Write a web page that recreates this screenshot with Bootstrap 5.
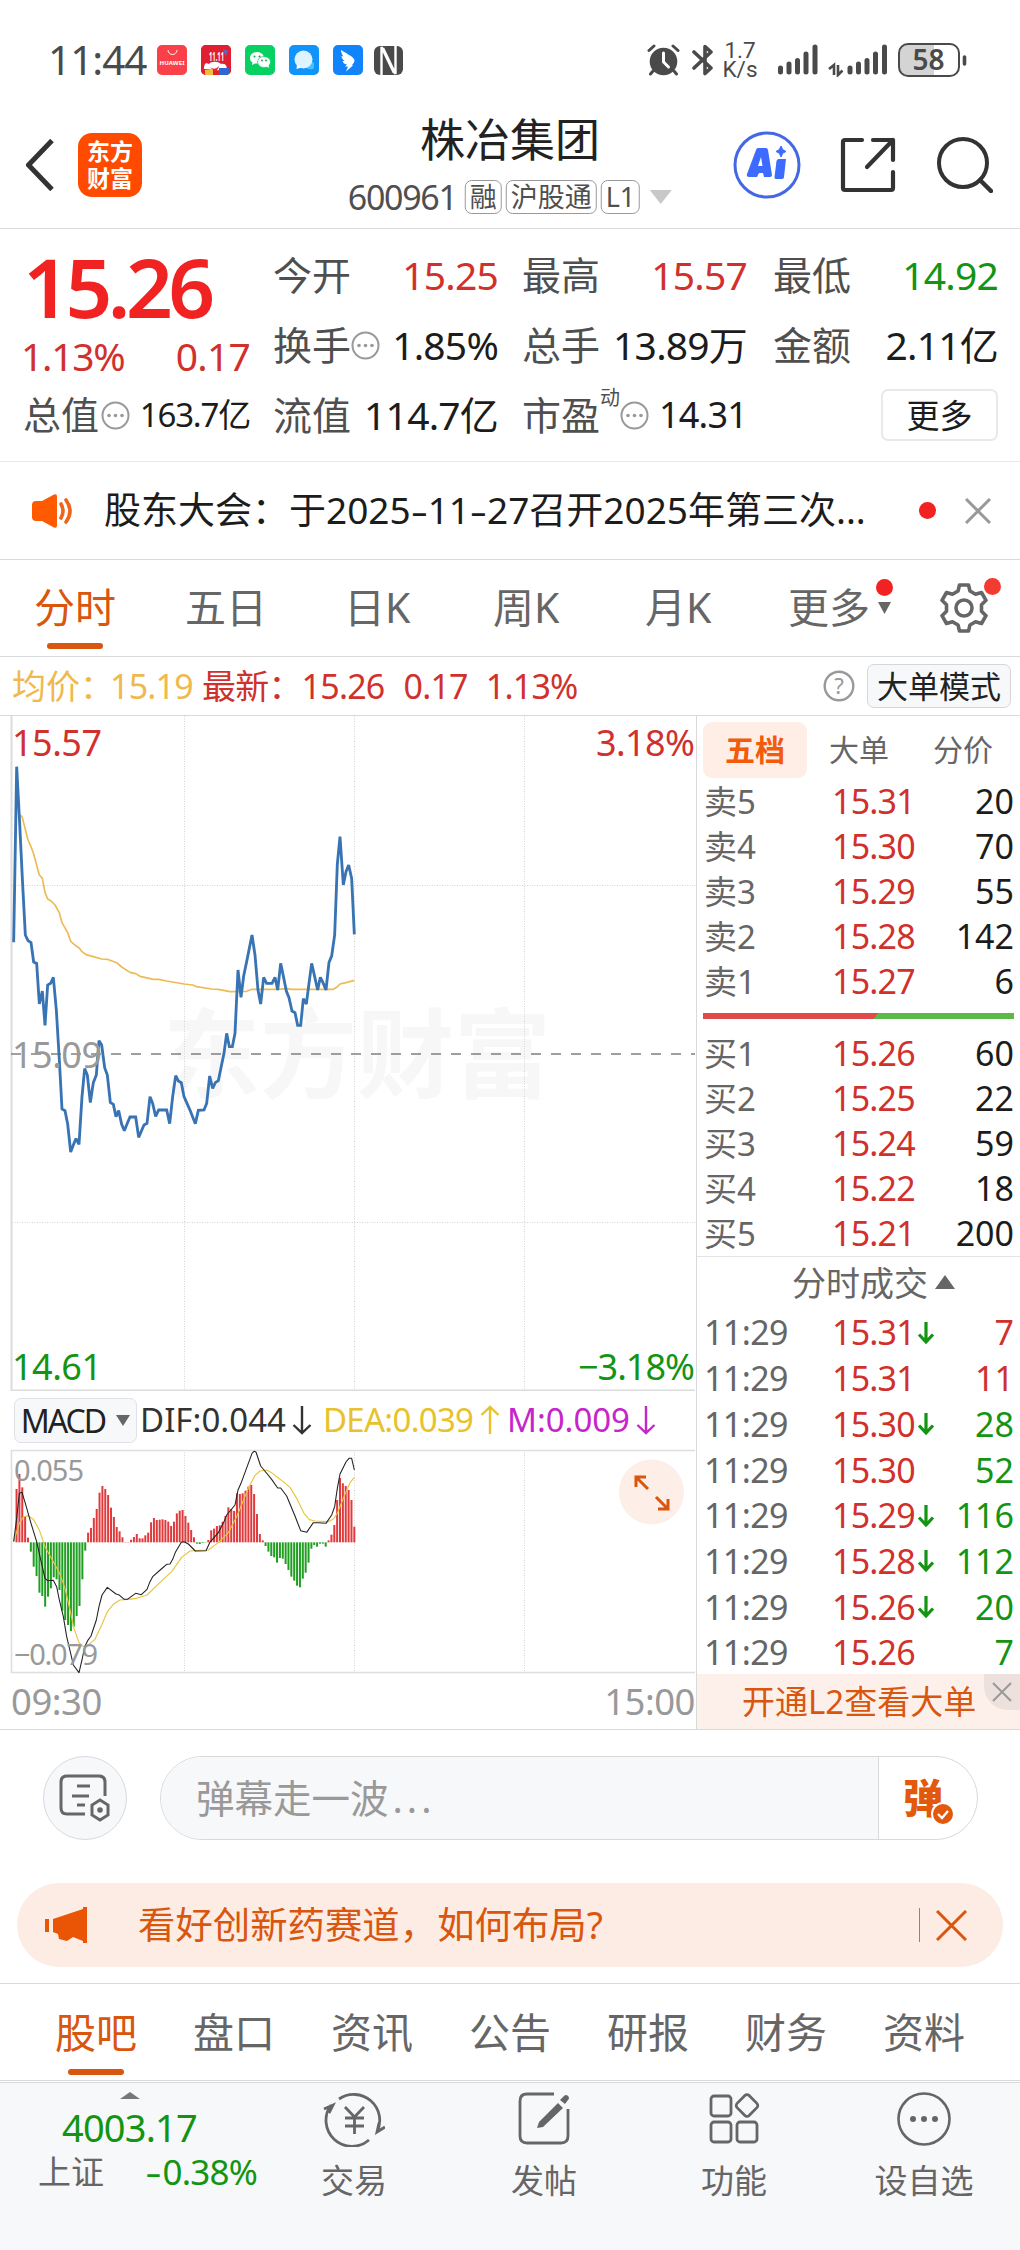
<!DOCTYPE html>
<html lang="zh-CN">
<head>
<meta charset="utf-8">
<meta name="viewport" content="width=device-width, initial-scale=1">
<title>株冶集团 600961</title>
<link rel="stylesheet" href="https://cdn.jsdelivr.net/npm/bootstrap@5.3.0/dist/css/bootstrap.min.css">
<style>
:root{--up:#d0312d;--down:#139413;--brand:#d9560f;--ink:#1c1c1c;--mid:#4f4f4f;--soft:#666;--line:#d8d9db}
body{width:1020px;font-family:"Noto Sans","Noto Sans CJK SC",sans-serif;color:var(--ink);background:#fff;line-height:1.2;overflow-x:hidden}
svg{display:block;flex:none}
svg text{font-family:"Noto Sans","Noto Sans CJK SC",sans-serif}
.up{color:var(--up)}.down{color:var(--down)}.brand{color:var(--brand)}.soft{color:var(--soft)}.mid{color:var(--mid)}
.lh{white-space:nowrap}
.statusbar{height:113px;padding:7px 52px 0 48px;color:#4a4a4a}
.clock{font-size:40.5px;letter-spacing:-1px;width:109px}
.appicon{width:30px;height:30px;border-radius:5px;margin-right:14px;overflow:hidden}
.rate{font-family:Roboto,"Noto Sans",sans-serif;font-size:22.5px;line-height:19.5px;width:36px;text-align:center}
.head{height:116px;border-bottom:1px solid var(--line);padding:0 27px 12px 26px}
.brandlogo{width:64px;height:64px;border-radius:14px;background:#ff4a00;color:#fff;font-size:23px;line-height:27px;font-weight:700;margin-left:24px;text-align:center}
.stockname{font-size:45px;line-height:54px;color:#222}
.code{font-size:34px;letter-spacing:-1.3px;color:var(--mid);margin-right:8px}
.tagbox{border:1px solid #999;border-radius:7px;height:34px;font-size:27px;line-height:32px;color:var(--mid);padding:0 4px;margin-right:4px}
.caret-d{width:0;height:0;border-left:11px solid transparent;border-right:11px solid transparent;border-top:14px solid #c8c8c8}
.quote{height:233px;padding:11px 20px 0 24px;border-bottom:1px solid #e8e8e8;gap:24px}
.qcol{width:225px;flex:none}
.qcol.wide{width:227px;margin-left:-1px}
.qcol:last-child{margin-left:2px}
.qrow{height:70px;font-size:39px;white-space:nowrap}
.qrow .k{color:var(--mid)}
.price{height:92px;font-size:82px;font-weight:600;color:#f02222;letter-spacing:-4.5px}
.chg{height:48px;font-size:39px}
.tight{letter-spacing:-.8px}
.morebtn{width:117px;height:52px;border:2px solid #e9e9eb;border-radius:7px;font-size:33px;line-height:47px;padding:0;color:var(--ink);background:#fff}
.notice{height:98px;border-bottom:1px solid var(--line);padding:0 29px 0 32px;font-size:37px}
.hy{display:inline-block;width:17px;text-align:center;transform:scaleX(1.45)}
.reddot{width:17px;height:17px;border-radius:50%;background:#f02222}
.periods{height:97px;border-bottom:1px solid var(--line);font-size:41px;color:var(--soft)}
.periods>div{height:96px;white-space:nowrap}
.ul{position:absolute;height:6px;width:56px;border-radius:3px;background:var(--brand)}
.info{height:58px;font-size:34px;padding:0 9px 0 12px;white-space:nowrap}
.modebtn{width:144px;height:44px;border:1px solid #d4d6da;border-radius:7px;background:#f7f8fa;font-size:31px;line-height:42px;padding:0;color:#222}
.main{height:1015px;border-top:1px solid var(--line);border-bottom:1px solid var(--line)}
.left{width:697px;border-right:1px solid var(--line)}
.right{width:323px}
.macdrow{height:58px;padding-left:14px;font-size:33px;white-space:nowrap}
.macdbtn{width:123px;height:45px;border:1px solid #dfe2e6;border-radius:7px;background:#f7f8fa;padding:0;font-size:32px;line-height:43px;color:#222}
.booktabs{height:62px;padding:6px 0 0 6px;font-size:30px;color:var(--soft)}
.booktabs>div{width:104px;height:56px;line-height:56px;text-align:center;white-space:nowrap}
.booktabs .on{background:#feeee6;border-radius:9px;color:#f25a0c;font-weight:700}
.book{padding-top:1px}
.brow{height:45px;padding:0 6px 0 7px;font-size:34px;white-space:nowrap}
.brow .l{width:128px;color:var(--soft)}
.brow .l.cj{font-size:33px}
.brow .p{color:var(--up);flex:1}
.tick .l{font-size:34px;letter-spacing:-.6px}
.brow.tick{height:45.7px}
.tick .p{display:flex;align-items:center}
.bidask{height:6px;margin:9px 6px 12px 6px;background:linear-gradient(125deg,#df4b4b 55.5%,#5cb848 55.6%)}
.tickhead{height:54px;border-top:1px solid #e3e4e6;font-size:34px;color:var(--soft);padding-left:30px}
.l2{height:55px;margin-top:-1.6px;background:#fdf0ea;font-size:33px;white-space:nowrap;padding-left:45px}
.l2x{position:absolute;right:0;top:0;width:36px;height:36px;background:#ece1dc;border-bottom-left-radius:24px}
.danmu{height:153px;padding:26px 42px 0 43px}
.roundbtn{width:84px;height:84px;border-radius:50%;border:1px solid #d8dae2;background:#f7f8fa;margin-right:33px}
.pill{width:818px;height:84px;border-radius:42px;border:1px solid var(--line);background:#fff;overflow:hidden}
.pill .ph{width:718px;background:#f7f8fa;border-right:1px solid var(--line);font-size:38.500px;color:#999;padding-left:35px}
.dotdot{letter-spacing:4px;margin-left:4px}
.send{font-size:40px;font-weight:900;color:#e2590d}
.promo{height:84px;margin:0 17px 16px;border-radius:42px;background:#fcece3;font-size:37.400px;color:var(--brand);padding:0 36px 0 28px}
.sections{height:98px;border-top:1px solid var(--line);border-bottom:1px solid var(--line);font-size:41px;color:var(--soft);padding:2px 0 0 27px}
.sections>div{width:138px;height:94px;white-space:nowrap}
.bottombar{height:168px;margin-top:1px;border-top:1px solid var(--line);background:#f7f8fa;color:var(--soft);font-size:33px}
.bi{width:190px;padding-top:8px}
.bi span{line-height:40px;margin-top:14px}
.idx{width:259px}
</style>
</head>
<body>
<div class="statusbar d-flex align-items-center">
  <span class="clock">11:44</span>
  <div class="appicon" style="background:#fb4049"><svg width="30" height="30"><path d="M11 5a4.500 4.500 0 0 0 9 0" fill="none" stroke="#fff" stroke-width="1"/><text x="15" y="19.500" font-size="6" font-weight="700" text-anchor="middle" fill="#fff" textLength="25">HUAWEI</text></svg></div>
  <div class="appicon" style="background:#d81e2c"><svg width="30" height="30"><path d="M0 0h30v30H0z" fill="#e01f30"/><path d="M22 4l5 2-2 5z" fill="#4b6fd0"/><text x="15.500" y="16" font-size="12" font-weight="700" text-anchor="middle" fill="#fff" textLength="15" lengthAdjust="spacingAndGlyphs">11.11</text><path d="M3 24c0-7 3-6 5-5 2-3 9-3 12 0 5-1 6 2 6 7z" fill="#fff"/><path d="M9 22q5 4 9-1-1 5-5 5z" fill="#d8342c"/><path d="M4 25h8v5H4z" fill="#f5b93c"/><path d="M18 23h10v7H18z" fill="#2f66d6"/></svg></div>
  <div class="appicon" style="background:#07d160"><svg width="30" height="30" fill="#fff"><path d="M12 7c-4 0-7 2.600-7 6 0 2 1 3.600 2.500 4.600L7 20l3-1.600c4 .8 9-1 9-5.400 0-3.400-3-6-7-6z"/><ellipse cx="19" cy="17" rx="6.500" ry="5.500" stroke="#07d160" stroke-width=".7"/><path d="M21 21l3 2-.5-3z"/><g fill="#07a850"><circle cx="9.500" cy="11.500" r="1"/><circle cx="14.500" cy="11.500" r="1"/><circle cx="17" cy="15.500" r=".9"/><circle cx="21" cy="15.500" r=".9"/></g></svg></div>
  <div class="appicon" style="background:#1093fb"><svg width="30" height="30"><path d="M18 17h6.500c1 3 .5 5 0 7-3 .8-6 .3-8-2z" fill="#3cc6ff"/><circle cx="14.500" cy="14.500" r="9" fill="#dff3ff"/><path d="M8 20l-.5 4 5-1.500z" fill="#fff"/></svg></div>
  <div class="appicon" style="background:#1284fb;margin-right:11px"><svg width="30" height="30"><path d="M8 5c4 3 10 5 13 9 1.500 2-1 5-2 6l1 .5-7 6 2-5h-3l2-2c-3-.5-4-2-4.500-3.500h2C9 14 8.500 12 8.500 11l2 .5C8.500 9 8 7 8 5z" fill="#fff"/></svg></div>
  <svg width="29" height="29"><rect width="29" height="29" rx="6" fill="#4a4a4a"/><path d="M7.500 29V1L20 27M21.500 0v28L9 2" fill="none" stroke="#fff" stroke-width="2.400"/></svg>
  <div class="flex-grow-1"></div>
  <svg width="34" height="32" viewBox="0 0 34 32"><circle cx="16.500" cy="17.500" r="13.800" fill="#4a4a4a"/><path d="M2 6.500L7 2M31 6.500L26 2M6 27l-2.500 3M27 27l2.500 3" stroke="#4a4a4a" stroke-width="3" stroke-linecap="round"/><path d="M16.500 9v9l5 5" fill="none" stroke="#fff" stroke-width="3" stroke-linecap="round"/></svg>
  <svg class="ms-2" width="30" height="32" viewBox="0 0 30 32" style="margin-right:3px"><path d="M5 8l17 16-6 5.500V2.500L22 8 5 24" fill="none" stroke="#4a4a4a" stroke-width="3.600" stroke-linecap="round" stroke-linejoin="round"/></svg>
  <div class="rate">1.7<br>K/s</div>
  <svg style="margin-left:19px" width="112" height="34" viewBox="0 0 112 34"><g stroke="#4a4a4a" stroke-width="5" stroke-linecap="round"><path d="M3.500 25v4M12 21v8M20.500 17.500v11.500M29 11v18M38 4v25M73 25v4M81.500 21v8M90 17.500v11.500M98.500 11v18M107.500 4v25"/></g><path d="M52 26l5-4v10M61 22v10l4.500-4.500" fill="none" stroke="#4a4a4a" stroke-width="2.600"/></svg>
  <svg style="margin-left:9px" width="70" height="34" viewBox="0 0 70 34"><path d="M9 1h27v32H9q-8 0-8-8V9q0-8 8-8" fill="#d4d4d4"/><rect x="1" y="1" width="60" height="32" rx="9" fill="none" stroke="#4a4a4a" stroke-width="2"/><path d="M66.500 14v7" stroke="#4a4a4a" stroke-width="3.600" stroke-linecap="round"/><text x="30.500" y="27" font-size="28" font-weight="600" text-anchor="middle" fill="#4a4a4a" textLength="32">58</text></svg>
</div>

<header class="head d-flex align-items-center position-relative">
  <svg width="28" height="52" viewBox="0 0 28 52"><path d="M26 1.500L2.500 26 26 50.500" fill="none" stroke="#333" stroke-width="5"/></svg>
  <div class="brandlogo d-flex align-items-center justify-content-center">东方<br>财富</div>
  <div class="flex-grow-1"></div>
  <svg width="68" height="68" viewBox="0 0 68 68"><circle cx="34" cy="34" r="32" fill="#fff" stroke="#4468e4" stroke-width="3"/><path d="M25 17h8q1.500 0 2 2l4 25q0 2-2 2h-6l-1-4h-4l-2 4h-8q-3 0-2-3l9-24q.5-2 2-2zM28 26l-3 9h4.500z" fill="#3d6bff" fill-rule="evenodd"/><path d="M46 28h7l-2 18q0 2-2 2h-6q-2 0-1.500-2l2-16q.5-2 2.500-2z" fill="#3d6bff"/><path d="M48 15l1.700 3.600L53 20.500l-3.300 1.700L48 26l-1.700-3.800-3.300-1.700 3.300-1.900z" fill="#3d6bff" stroke="#3d6bff" stroke-width="1"/></svg>
  <svg style="margin-left:39px" width="56" height="56" viewBox="0 0 56 56"><path d="M22 3H5q-2 0-2 2v46q0 2 2 2h46q2 0 2-2V35M33 3h20v20M53 3L27 30" fill="none" stroke="#333" stroke-width="4.200" stroke-linecap="round" stroke-linejoin="round"/></svg>
  <svg style="margin-left:41px" width="56" height="56" viewBox="0 0 56 56"><circle cx="26" cy="26" r="24" fill="none" stroke="#333" stroke-width="4"/><path d="M43 43l11 11" stroke="#333" stroke-width="4.500" stroke-linecap="round"/></svg>
  <div class="position-absolute top-0 start-50 translate-middle-x d-flex flex-column align-items-center">
    <div class="stockname lh">株冶集团</div>
    <div class="d-flex align-items-center lh" style="margin-top:12px;height:36px"><span class="code">600961</span><span class="tagbox">融</span><span class="tagbox">沪股通</span><span class="tagbox">L1</span><span class="caret-d" style="margin-left:6px"></span></div>
  </div>
</header>

<section class="quote d-flex">
  <div class="qcol wide">
    <div class="price d-flex align-items-center">15.26</div>
    <div class="chg up d-flex align-items-center justify-content-between"><span style="letter-spacing:-1.300px;margin-left:-2px">1.13%</span><span class="tight">0.17</span></div>
    <div class="qrow d-flex align-items-center"><span class="k" style="font-size:38px">总值</span><svg width="29" height="29" style="margin-left:2px"><use href="#dots"/></svg><span class="ms-auto" style="font-size:33px;letter-spacing:-1.200px">163.7亿</span></div>
  </div>
  <div class="qcol" style="margin-left:-1px">
    <div class="qrow d-flex align-items-center justify-content-between"><span class="k">今开</span><span class="up tight">15.25</span></div>
    <div class="qrow d-flex align-items-center"><span class="k">换手</span><svg width="29" height="29"><use href="#dots"/></svg><span class="ms-auto tight">1.85%</span></div>
    <div class="qrow d-flex align-items-center justify-content-between"><span class="k">流值</span><span class="tight">114.7亿</span></div>
  </div>
  <div class="qcol">
    <div class="qrow d-flex align-items-center justify-content-between"><span class="k">最高</span><span class="up tight">15.57</span></div>
    <div class="qrow d-flex align-items-center justify-content-between"><span class="k">总手</span><span class="tight">13.89万</span></div>
    <div class="qrow d-flex align-items-center"><span class="k">市盈</span><span class="k align-self-start" style="font-size:20px;margin-top:6px">动</span><svg width="29" height="29"><use href="#dots"/></svg><span class="ms-auto tight" style="font-size:36px">14.31</span></div>
  </div>
  <div class="qcol">
    <div class="qrow d-flex align-items-center justify-content-between"><span class="k">最低</span><span class="down tight">14.92</span></div>
    <div class="qrow d-flex align-items-center justify-content-between"><span class="k">金额</span><span class="tight">2.11亿</span></div>
    <div class="qrow d-flex align-items-center justify-content-end"><button class="btn morebtn">更多</button></div>
  </div>
</section>

<section class="notice d-flex align-items-center">
  <svg width="42" height="36" viewBox="0 0 42 36"><path d="M4 8h6L22 1.500q3-1 3 2v29q0 3-3 2L10 28H4q-4 0-4-4V12q0-4 4-4z" fill="#ff5a00"/><path d="M29 11q4 7 0 14M34 7q8 11 0 22" fill="none" stroke="#f0641a" stroke-width="3.600" stroke-linecap="round"/></svg>
  <span class="lh" style="margin-left:30px">股东大会：于2025<span class="hy">-</span>11<span class="hy">-</span>27召开2025年第三次...</span>
  <span class="reddot ms-auto" style="margin-right:29px"></span>
  <svg width="26" height="26" viewBox="0 0 26 26"><path d="M1 1l24 24M25 1L1 25" stroke="#999" stroke-width="3"/></svg>
</section>

<nav class="periods d-flex">
  <div class="brand position-relative d-flex align-items-center" style="padding-left:34px;width:185px">分时<span class="ul" style="left:47px;bottom:7px"></span></div>
  <div class="d-flex align-items-center" style="width:159px">五日</div>
  <div class="d-flex align-items-center" style="width:149px">日K</div>
  <div class="d-flex align-items-center" style="width:152px">周K</div>
  <div class="d-flex align-items-center" style="width:143px">月K</div>
  <div class="d-flex align-items-center position-relative" style="width:152px">更多<svg style="margin:0 0 0 8px" width="14" height="12"><path d="M0 0h13L6.500 12z" fill="#666"/></svg><span class="reddot position-absolute" style="left:88px;top:19px"></span></div>
  <div class="d-flex align-items-center position-relative"><svg width="48" height="50" viewBox="0 0 48 50"><path d="M19.500 2h9l1.500 6 5.500 3.200 6-1.700 4.500 7.800-4.500 4.400v6.600l4.500 4.400-4.500 7.800-6-1.700L30 42l-1.500 6h-9L18 42l-5.500-3.200-6 1.700L2 32.700l4.500-4.400v-6.600L2 17.300l4.500-7.800 6 1.700L18 8z" fill="none" stroke="#666" stroke-width="3.600" stroke-linejoin="round"/><circle cx="24" cy="25" r="8" fill="none" stroke="#666" stroke-width="3.600"/></svg><span class="reddot position-absolute" style="left:44px;top:18px;background:#f33b32"></span></div>
</nav>

<section class="info d-flex align-items-center">
  <span style="color:#efb94e;width:190px">均价：<span class="tight" style="margin-left:-4px">15.19</span></span>
  <span class="up tight">最新：15.26<span style="margin:0 18px 0 19px">0.17</span>1.13%</span>
  <svg class="ms-auto" style="margin-right:12px" width="32" height="32" viewBox="0 0 32 32"><circle cx="16" cy="16" r="14.300" fill="none" stroke="#999" stroke-width="2.400"/><text x="16" y="24" font-size="22" text-anchor="middle" fill="#999">?</text></svg>
  <button class="btn modebtn">大单模式</button>
</section>

<main class="main d-flex">
  <div class="left">
    <svg width="696" height="675" viewBox="0 716 696 675">
      <text x="163" y="1090" font-size="97" font-weight="700" fill="#f7f7f8">东方财富</text>
      <g stroke="#d4d4d4" stroke-dasharray="1 1.500"><path d="M184.500 716V1390M354.500 716V1390M524.500 716V1390M12 885.500H696M12 1222.500H696" fill="none"/></g>
      <path d="M11.500 715V1390.500H695" fill="none" stroke="#dcdcdc" stroke-width="2"/>
      <path d="M11 1054H695" stroke="#808080" stroke-width="1.600" stroke-dasharray="10 10"/>
      <g font-size="36" fill="#d0312d"><text x="12" y="756" textLength="90">15.57</text><text x="695" y="756" text-anchor="end" textLength="99">3.18%</text></g>
      <g font-size="36" fill="#139413"><text x="12" y="1380" textLength="90">14.61</text><text x="695" y="1380" text-anchor="end" textLength="117">−3.18%</text></g>
      <g transform="translate(0 700) scale(.33333)" fill="none" stroke-linejoin="round">
        <polyline stroke="#ecbb54" stroke-width="5" points="60,347 66,349 84,420 93,440 101,462 118,525 127,535 135,577 143,597 152,602 165,615 178,638 186,668 203,698 212,724 228,738 237,743 246,755 258,764 280,770 305,777 322,778 350,788 365,801 390,817 407,821 420,829 460,838 476,838 500,843 552,852 578,855 590,860 635,867 655,868 690,875 740,874 756,868 833,868 859,866 876,868 1000,868 1010,862 1020,852 1038,848 1063,841"/>
        <polyline stroke="#3873b4" stroke-width="8.500" stroke-linejoin="miter" stroke-miterlimit="2" points="41,727 50,200 58,350 67,535 76,705 84,722 93,728 101,786 110,790 118,912 127,873 135,976 143,855 152,850 160,832 169,930 178,1080 186,1227 195,1232 203,1272 212,1356 220,1335 228,1316 237,1333 246,1190 254,1106 262,1125 271,1208 280,1148 289,1125 297,1022 305,1035 314,1103 322,1125 331,1207 340,1213 348,1250 356,1232 365,1273 373,1292 382,1270 390,1251 407,1251 416,1312 432,1275 441,1270 450,1190 458,1210 467,1249 476,1230 500,1230 509,1271 518,1190 527,1127 535,1143 544,1148 552,1190 569,1228 586,1271 595,1231 612,1230 620,1210 629,1128 638,1165 646,1148 655,1142 663,1103 672,1060 680,1000 688,1040 697,1040 705,1000 714,810 723,892 731,828 740,785 748,745 756,705 765,765 774,870 782,912 791,832 800,850 816,850 825,832 833,870 842,790 850,828 859,873 867,893 876,933 885,938 893,976 902,976 910,896 919,912 927,850 935,790 944,830 953,870 961,832 969,848 978,870 987,787 995,768 1004,705 1012,492 1020,410 1030,555 1038,515 1046,495 1055,535 1063,703"/>
      </g>
      <text x="12" y="1068" font-size="36" fill="#999" textLength="90">15.09</text>
    </svg>
    <div class="macdrow d-flex align-items-center">
      <button class="btn macdbtn d-flex align-items-center justify-content-center"><span style="letter-spacing:-2px">MACD</span><svg style="margin-left:11px" width="14" height="11"><path d="M0 0h14L7 11z" fill="#666"/></svg></button>
      <svg width="540" height="44" viewBox="137 0 540 44" font-size="33"><text x="140" y="34" fill="#333" textLength="146">DIF:0.044</text><path d="M302 8v27M293.500 27l8.500 8 8.500-8" fill="none" stroke="#333" stroke-width="2.400"/><text x="323" y="34" fill="#e8c22c" textLength="151">DEA:0.039</text><path d="M490 36V9M481.500 17l8.500-8 8.500 8" fill="none" stroke="#e8c22c" stroke-width="2.400"/><text x="507" y="34" fill="#c526c9" textLength="123">M:0.009</text><path d="M646 8v27M637.500 27l8.500 8 8.500-8" fill="none" stroke="#c526c9" stroke-width="2.400"/></svg>
    </div>
    <svg width="696" height="225" viewBox="0 1449 696 225">
      <path d="M184.500 1450V1672M354.500 1450V1672M524.500 1450V1672" stroke="#d4d4d4" stroke-dasharray="1 1.500"/>
      <path d="M695 1450.500H11.500V1672.500H695" fill="none" stroke="#dedede" stroke-width="1.600"/>
      <g id="macdBars" transform="translate(0 1370) scale(.33333)"></g>
      <text x="14" y="1481" font-size="29" fill="#999" textLength="70">0.055</text>
      <g transform="translate(0 1370) scale(.33333)" fill="none" stroke-linejoin="round">
        <polyline stroke="#e8c53c" stroke-width="3.400" points="41,515 58,460 70,441 84,437 100,448 118,480 135,530 160,575 178,608 195,655 210,720 222,775 237,818 250,830 263,826 285,808 305,765 322,725 340,703 360,690 385,688 410,685 441,675 480,637 515,605 545,562 570,543 600,541 625,540 655,518 685,488 710,440 745,355 765,316 780,303 800,300 815,308 832,322 850,335 870,352 890,385 912,430 928,449 945,453 985,455 1000,447 1012,430 1030,385 1050,338 1063,322"/>
        <polyline stroke="#222" stroke-width="3.200" points="41,515 50,445 58,370 66,367 76,400 93,460 110,515 120,560 135,625 143,632 160,631 170,650 178,690 190,740 200,800 212,850 220,885 237,908 246,870 254,830 263,812 273,798 289,750 297,710 306,675 322,652 348,672 356,674 373,688 382,688 407,670 424,674 441,658 450,635 458,620 484,597 500,583 510,582 518,568 527,545 544,517 552,515 565,522 586,543 618,542 629,518 655,488 672,455 680,435 705,405 714,360 723,340 756,250 762,244 768,246 782,288 792,300 815,328 833,354 842,354 860,378 885,438 902,482 920,487 940,458 955,458 978,460 995,435 1004,410 1012,355 1020,312 1038,276 1047,265 1055,265 1063,300"/>
      </g>
      <text x="14" y="1665" font-size="29" fill="#999" textLength="84">−0.079</text>
      <circle cx="651.500" cy="1492" r="32.500" fill="#fdeee7"/>
      <path d="M648 1489l-11-11M636 1487v-10h10M656 1497l11 11M668 1499v10h-10" fill="none" stroke="#d9560f" stroke-width="3"/>
    </svg>
    <div class="d-flex justify-content-between align-items-center" style="height:55px;padding:0 1px 0 11px;font-size:36.500px;color:#999;letter-spacing:-.5px"><span>09:30</span><span>15:00</span></div>
  </div>

  <div class="right">
    <div class="booktabs d-flex"><div class="on">五档</div><div>大单</div><div>分价</div></div>
    <div class="book">
      <div class="brow d-flex align-items-center"><span class="l cj">卖5</span><span class="p tight">15.31</span><span>20</span></div>
      <div class="brow d-flex align-items-center"><span class="l cj">卖4</span><span class="p tight">15.30</span><span>70</span></div>
      <div class="brow d-flex align-items-center"><span class="l cj">卖3</span><span class="p tight">15.29</span><span>55</span></div>
      <div class="brow d-flex align-items-center"><span class="l cj">卖2</span><span class="p tight">15.28</span><span>142</span></div>
      <div class="brow d-flex align-items-center"><span class="l cj">卖1</span><span class="p tight">15.27</span><span>6</span></div>
      <div class="bidask"></div>
      <div class="brow d-flex align-items-center"><span class="l cj">买1</span><span class="p tight">15.26</span><span>60</span></div>
      <div class="brow d-flex align-items-center"><span class="l cj">买2</span><span class="p tight">15.25</span><span>22</span></div>
      <div class="brow d-flex align-items-center"><span class="l cj">买3</span><span class="p tight">15.24</span><span>59</span></div>
      <div class="brow d-flex align-items-center"><span class="l cj">买4</span><span class="p tight">15.22</span><span>18</span></div>
      <div class="brow d-flex align-items-center"><span class="l cj">买5</span><span class="p tight">15.21</span><span>200</span></div>
    </div>
    <div class="tickhead d-flex align-items-center justify-content-center">分时成交<svg style="margin:0 0 4px 7px" width="20" height="14"><path d="M10 0l10 14H0z" fill="#666"/></svg></div>
    <div class="brow tick d-flex align-items-center"><span class="l">11:29</span><span class="p tight">15.31<svg width="22" height="24"><use href="#dn"/></svg></span><span class="up">7</span></div>
    <div class="brow tick d-flex align-items-center"><span class="l">11:29</span><span class="p tight">15.31</span><span class="up">11</span></div>
    <div class="brow tick d-flex align-items-center"><span class="l">11:29</span><span class="p tight">15.30<svg width="22" height="24"><use href="#dn"/></svg></span><span class="down">28</span></div>
    <div class="brow tick d-flex align-items-center"><span class="l">11:29</span><span class="p tight">15.30</span><span class="down">52</span></div>
    <div class="brow tick d-flex align-items-center"><span class="l">11:29</span><span class="p tight">15.29<svg width="22" height="24"><use href="#dn"/></svg></span><span class="down">116</span></div>
    <div class="brow tick d-flex align-items-center"><span class="l">11:29</span><span class="p tight">15.28<svg width="22" height="24"><use href="#dn"/></svg></span><span class="down">112</span></div>
    <div class="brow tick d-flex align-items-center"><span class="l">11:29</span><span class="p tight">15.26<svg width="22" height="24"><use href="#dn"/></svg></span><span class="down">20</span></div>
    <div class="brow tick d-flex align-items-center"><span class="l">11:29</span><span class="p tight">15.26</span><span class="down">7</span></div>
    <div class="l2 brand d-flex align-items-center position-relative">开通L2查看大单<span class="l2x d-flex align-items-center justify-content-center"><svg width="20" height="20"><path d="M1 1l18 18M19 1L1 19" stroke="#999" stroke-width="2"/></svg></span></div>
  </div>
</main>

<section class="danmu d-flex">
  <div class="roundbtn d-flex align-items-center justify-content-center"><svg width="54" height="50" viewBox="0 0 54 50"><path d="M27 41H9q-6 0-6-6V9q0-6 6-6h32q6 0 6 6v14" fill="none" stroke="#666" stroke-width="3"/><path d="M19 13h13M14 23h17M19 32h8" stroke="#666" stroke-width="3"/><path d="M42 27l8 5v10l-8 5-8-5V32z" fill="none" stroke="#666" stroke-width="3"/><circle cx="42" cy="37" r="2.800" fill="#666"/></svg></div>
  <div class="pill d-flex">
    <div class="ph d-flex align-items-center">弹幕走一波<span class="dotdot">...</span></div>
    <div class="flex-grow-1 position-relative d-flex align-items-center" style="padding-left:24px"><span class="send">弹</span><svg class="position-absolute" style="left:52px;top:45px" width="24" height="24"><circle cx="12" cy="12" r="11" fill="#e2590d" stroke="#fff" stroke-width="2"/><path d="M7 12l4 4 6-7" fill="none" stroke="#fff" stroke-width="2.400"/></svg></div>
  </div>
</section>

<section class="promo d-flex align-items-center">
  <svg width="44" height="38" viewBox="0 0 44 38"><path d="M0 13h4v13H0zM8 13L38 3V1h4v36h-4v-2l-10-4-6 4-8-2-1-5-5-2z" fill="#e95504"/></svg>
  <span class="lh" style="margin-left:49px">看好创新药赛道，如何布局?</span>
  <span class="ms-auto" style="width:1px;height:34px;background:#c9713f;margin-right:16px"></span>
  <svg width="31" height="31"><path d="M1 1l29 29M30 1L1 30" stroke="#d9560f" stroke-width="3"/></svg>
</section>

<nav class="sections d-flex">
  <div class="brand position-relative d-flex align-items-center justify-content-center">股吧<span class="ul" style="left:41px;bottom:5px"></span></div>
  <div class="d-flex align-items-center justify-content-center">盘口</div>
  <div class="d-flex align-items-center justify-content-center">资讯</div>
  <div class="d-flex align-items-center justify-content-center">公告</div>
  <div class="d-flex align-items-center justify-content-center">研报</div>
  <div class="d-flex align-items-center justify-content-center">财务</div>
  <div class="d-flex align-items-center justify-content-center">资料</div>
</nav>

<footer class="bottombar d-flex">
  <div class="idx d-flex flex-column align-items-center" style="padding-top:9px">
    <svg width="20" height="7"><path d="M10 0l10 7H0z" fill="#777"/></svg>
    <div class="down tight" style="font-size:38px;line-height:46px;margin-top:5px">4003.17</div>
    <div class="d-flex align-items-center lh" style="height:44px;width:259px;padding:0 2px 0 38px"><span>上证</span><span class="down ms-auto" style="font-size:35px"><span class="hy">-</span><span class="tight">0.38%</span></span></div>
  </div>
  <div class="bi d-flex flex-column align-items-center"><svg width="62" height="56" viewBox="0 0 62 56" fill="none" stroke="#666" stroke-width="2.800"><path d="M16 8a26 26 0 0 1 38 33M46 49a26 26 0 0 1-38-35M1 18l9-4-4 8M62 36l-8 5 2-9"/><path d="M22 16l9.500 10L41 16M31.500 26v17M22 27h19M22 35h19"/></svg><span>交易</span></div>
  <div class="bi d-flex flex-column align-items-center"><svg width="54" height="56" viewBox="0 0 54 56"><path d="M37 3H10Q3 3 3 10v35q0 7 7 7h34q7 0 7-7V18" fill="none" stroke="#666" stroke-width="2.800"/><path d="M20 37l2-6 19-19 5 5-20 19zM43 9l4-4q2-2 4 0t0 4l-3 4z" fill="#666"/></svg><span>发帖</span></div>
  <div class="bi d-flex flex-column align-items-center"><svg width="52" height="56" viewBox="0 0 52 56" fill="none" stroke="#666" stroke-width="2.800"><rect x="3" y="5" width="20" height="20" rx="3"/><rect x="3" y="31" width="20" height="20" rx="3"/><rect x="29" y="31" width="20" height="20" rx="3"/><rect x="30.500" y="6" width="17" height="17" rx="3" transform="rotate(45 39 14.500)"/></svg><span>功能</span></div>
  <div class="bi d-flex flex-column align-items-center"><svg width="56" height="56" viewBox="0 0 56 56"><circle cx="28" cy="28" r="25.500" fill="none" stroke="#666" stroke-width="2.600"/><g fill="#666"><circle cx="17" cy="28" r="3"/><circle cx="28" cy="28" r="3"/><circle cx="39" cy="28" r="3"/></g></svg><span>设自选</span></div>
</footer>

<svg width="0" height="0" class="position-absolute top-0"><defs>
  <g id="dots"><circle cx="14.500" cy="14.500" r="13" fill="none" stroke="#999" stroke-width="2"/><g fill="#999"><circle cx="8" cy="14.500" r="1.800"/><circle cx="14.500" cy="14.500" r="1.800"/><circle cx="21" cy="14.500" r="1.800"/></g></g>
  <path id="dn" d="M11 1v20M4 13.500l7 7.500 7-7.500" fill="none" stroke="#139413" stroke-width="3.200"/>
</defs></svg>

<script src="https://cdn.jsdelivr.net/npm/bootstrap@5.3.0/dist/js/bootstrap.bundle.min.js"></script>
<script>
// One MACD histogram value per minute, relative to the zero line at 517.
const ends=[357,312,352,438,503,545,590,618,668,678,710,680,655,622,628,660,722,750,765,783,770,738,708,628,542,488,474,444,417,368,348,357,375,413,441,471,484,502,516,516,509,501,492,505,505,496,488,457,444,450,449,448,450,455,468,455,430,422,420,438,458,480,502,521,522,519,518,510,481,476,468,466,455,438,412,417,423,370,372,370,362,350,345,372,432,492,511,528,545,558,562,578,564,566,582,600,620,632,647,652,626,608,578,536,525,530,521,521,530,511,494,465,390,324,340,348,360,390,470];
const zero=517,NS='http://www.w3.org/2000/svg',g=document.getElementById('macdBars');
ends.forEach((e,i)=>{
  const r=document.createElementNS(NS,'rect');
  r.setAttribute('x',(41+8.588*(i+1)-3).toFixed(1));
  r.setAttribute('width','6');
  r.setAttribute('y',Math.min(e,zero));
  r.setAttribute('height',Math.abs(e-zero));
  r.setAttribute('fill',e<zero?'#df3a3c':'#1f9e1f');
  g.appendChild(r);
});
</script>
</body>
</html>
